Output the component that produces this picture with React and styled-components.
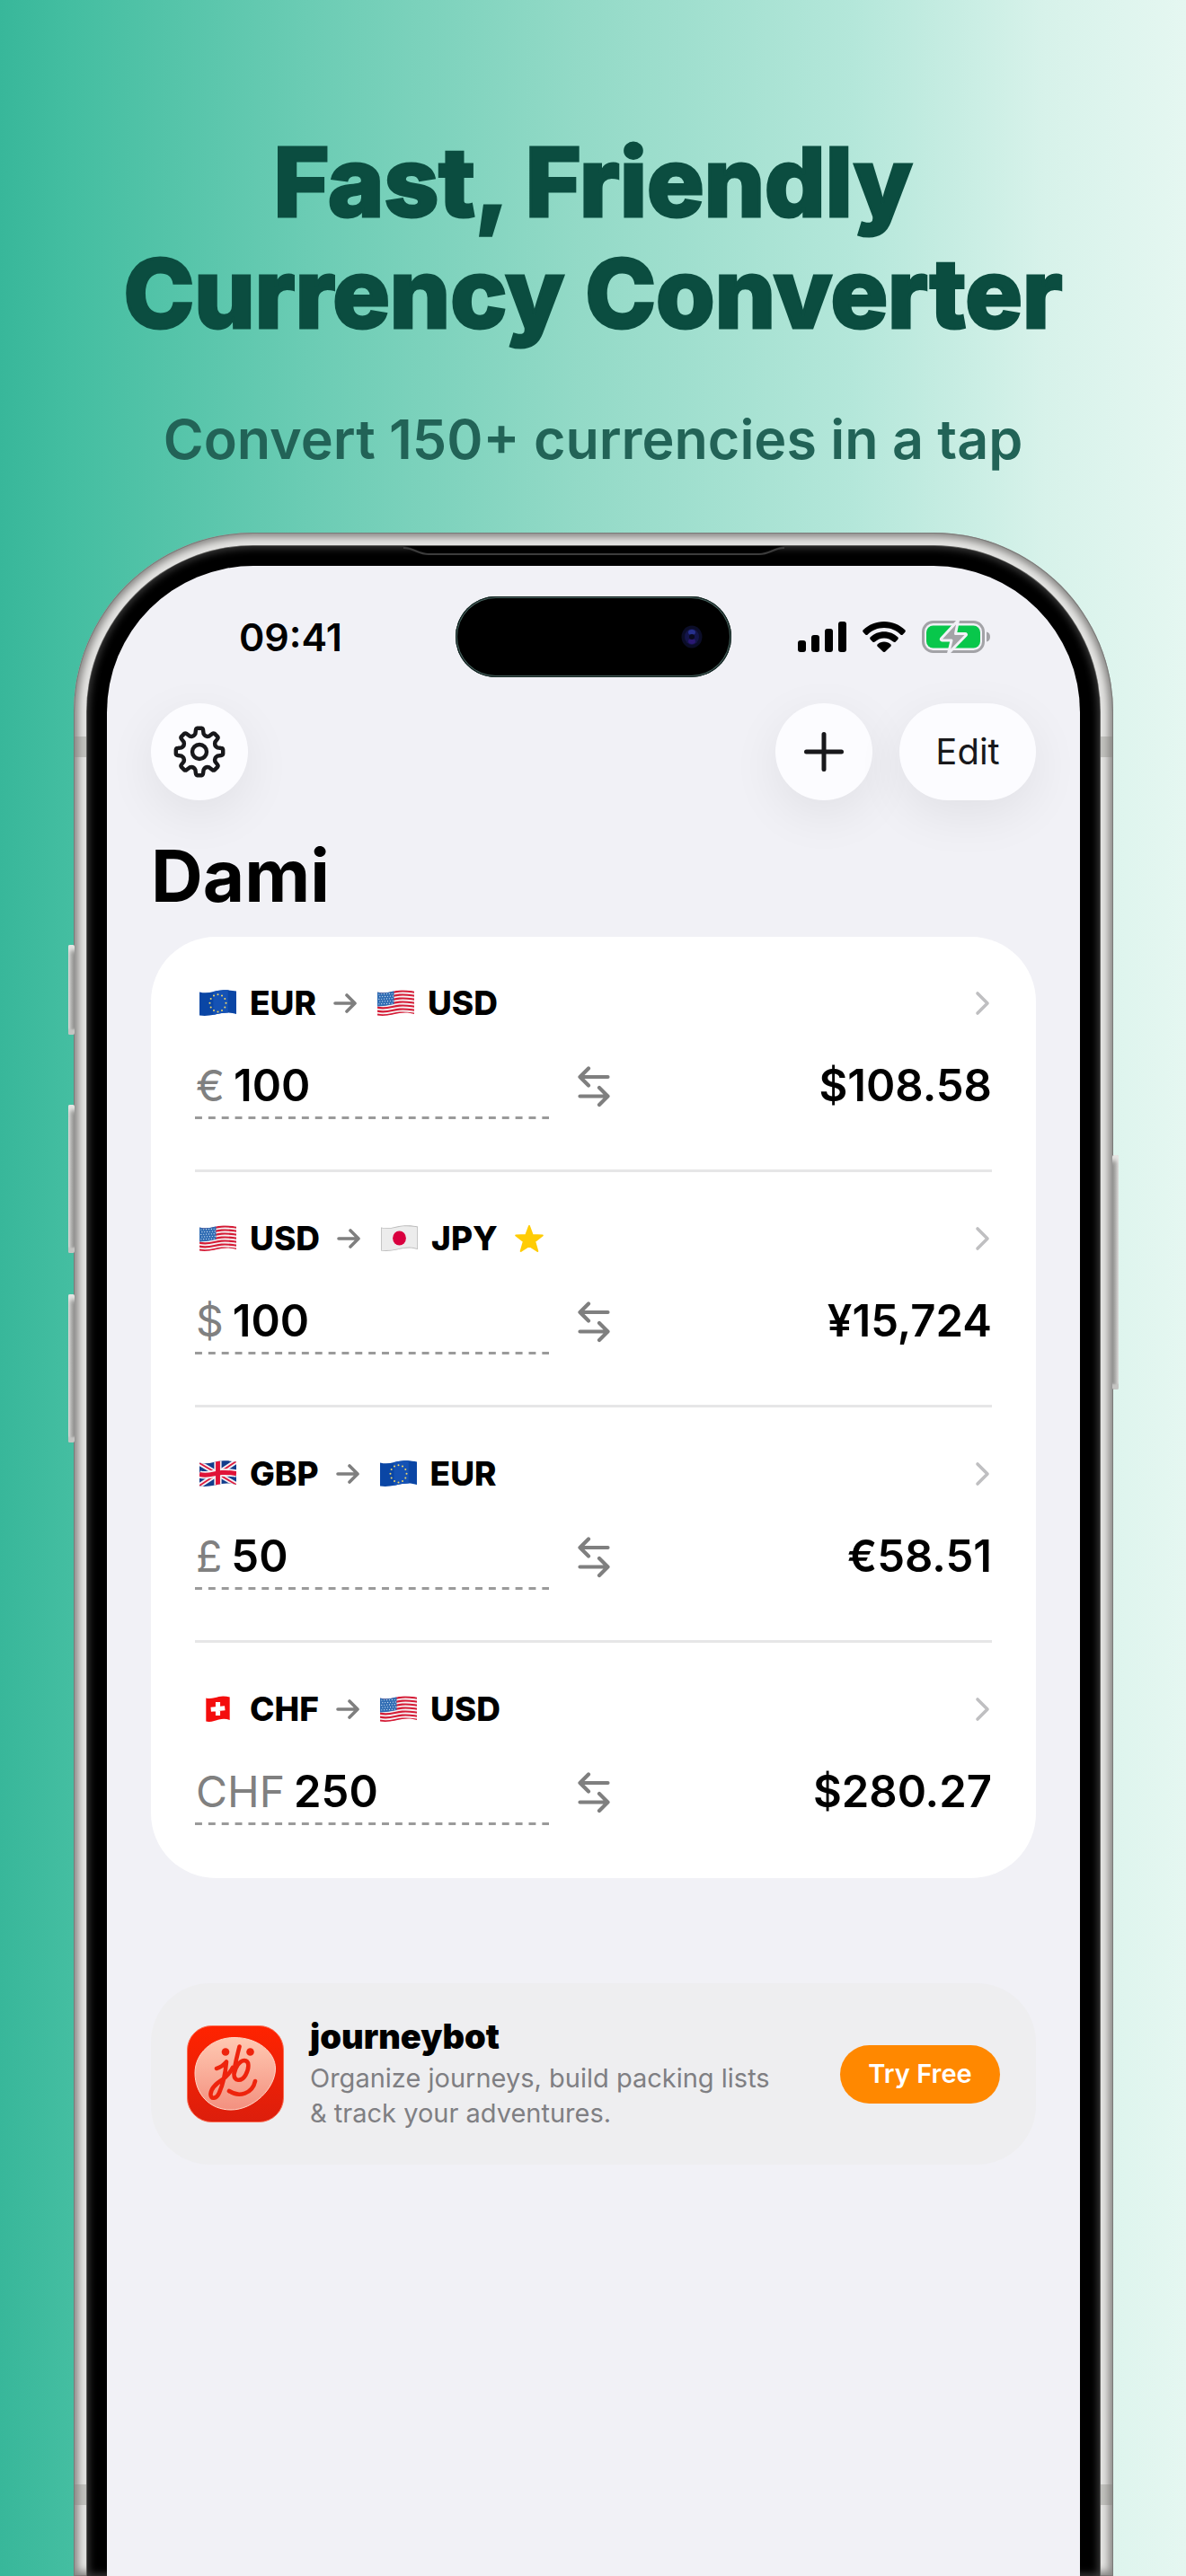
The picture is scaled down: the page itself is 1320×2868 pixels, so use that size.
import React, { useState } from "react";
import styled, { createGlobalStyle } from "styled-components";

const GlobalStyle = createGlobalStyle`
  *, *::before, *::after { box-sizing: border-box; }
  html, body, #root { margin: 0; min-height: 100vh; }
  body {
    font-family: Inter, "Liberation Sans", sans-serif;
    color: #000;
    -webkit-font-smoothing: antialiased;
  }
  button, input { font: inherit; color: inherit; }
`;

/* ---------- page ---------- */

const Page = styled.div`
  display: flex;
  flex-direction: column;
  min-height: 100vh;
  overflow: hidden;
  background: linear-gradient(
    90deg,
    #38b79a 0%,
    #44bea1 6%,
    #6bccb4 26%,
    #93dac7 49%,
    #b4e7da 72%,
    #d7f2ea 88%,
    #e5f7f1 100%
  );
`;

const Hero = styled.header`
  display: flex;
  flex-direction: column;
  align-items: center;
  gap: 60px;
  padding: 141px 40px 64px;
  text-align: center;
`;

const Headline = styled.h1`
  margin: 0;
  font-size: 106px;
  line-height: 124px;
  font-weight: 800;
  color: #0b4d40;
  -webkit-text-stroke: 3px #0b4d40;
  stroke-linejoin: round;
`;

const Tagline = styled.p`
  margin: 0;
  font-size: 61px;
  line-height: 80px;
  font-weight: 600;
  color: #226357;
`;

/* ---------- phone ---------- */

const Phone = styled.div`
  position: relative;
  display: flex;
  flex: 1;
  margin: 0 81px 0 82px;
  padding: 15px 15px 0;
  border-radius: 200px 200px 0 0;
  background: #e4e4e2;
  box-shadow:
    inset 0 0 0 1px #7b7b79,
    inset 0 0 9px 5px #868583;
`;

const Bezel = styled.div`
  position: relative;
  display: flex;
  flex: 1;
  padding: 22px 22px 0;
  border-radius: 185px 185px 0 0;
  background: #000;
  box-shadow:
    0 0 0 1px #5c5c5a,
    inset 0 0 8px 2px #3c3c3c;
`;

const Earpiece = styled.svg`
  position: absolute;
  top: 0;
  left: 50%;
  transform: translateX(-50%);
`;

const SideButton = styled.span`
  position: absolute;
  top: ${(p) => p.$top}px;
  ${(p) => p.$side}: -6px;
  width: 7px;
  height: ${(p) => p.$length}px;
  border-radius: 2px;
  background: linear-gradient(
    ${(p) => (p.$side === "left" ? "90deg" : "270deg")},
    #dcdcda 0%,
    #b3b3b1 45%,
    #8d8d8b 100%
  );
  box-shadow: inset 0 10px 5px -4px #e6e6e4, inset 0 -8px 2px -2px #c4c4c2;
`;

const AntennaBand = styled.span`
  position: absolute;
  ${(p) => p.$edge}: ${(p) => p.$offset}px;
  ${(p) => p.$side}: 1px;
  width: 13px;
  height: 23px;
  background: rgba(130, 128, 122, 0.35);
`;

const Screen = styled.main`
  flex: 1;
  min-width: 0;
  padding: 34px 49px 120px;
  border-radius: 163px 163px 0 0;
  background: #f1f1f6;
`;

/* ---------- status bar ---------- */

const StatusBar = styled.div`
  display: grid;
  grid-template-columns: 1fr 307px 1fr;
  align-items: center;
`;

const Clock = styled.time`
  padding-left: 98px;
  font-size: 43px;
  line-height: 50px;
  font-weight: 600;
`;

const Island = styled.div`
  display: flex;
  justify-content: flex-end;
  align-items: center;
  height: 90px;
  padding-right: 32px;
  border-radius: 45px;
  background: #000;
  box-shadow: inset 0 0 0 1px #10201e, inset 0 0 0 2px #47605c;
`;

const StatusIcons = styled.div`
  display: flex;
  justify-content: flex-end;
  align-items: center;
  gap: 18px;
  padding-right: 50px;
`;

/* ---------- navigation ---------- */

const Toolbar = styled.nav`
  display: flex;
  gap: 30px;
  margin-top: 29px;
`;

const RoundButton = styled.button`
  display: flex;
  align-items: center;
  justify-content: center;
  width: ${(p) => p.$width || 108}px;
  height: 108px;
  margin-right: ${(p) => (p.$first ? "auto" : "0")};
  padding: 0;
  border: 0;
  border-radius: 54px;
  background: #fcfcff;
  box-shadow: 0 16px 56px rgba(0, 0, 0, 0.07);
  color: #18181b;
  font-size: 40px;
  line-height: 48px;
  font-weight: 400;
`;

const ScreenTitle = styled.h2`
  margin: 36px 0 20px;
  font-size: 80px;
  line-height: 96px;
  font-weight: 700;
`;

/* ---------- conversions ---------- */

const Card = styled.ul`
  margin: 0;
  padding: 0 49px;
  list-style: none;
  border-radius: 72px;
  background: #fff;
`;

const Row = styled.li`
  padding: 52px 0 56px;
  border-bottom: 3px solid #e6e6e7;

  &:last-child {
    border-bottom-color: transparent;
  }
`;

const PairLink = styled.a`
  display: flex;
  align-items: center;
  height: 44px;
  padding: 0 2px 0 5px;
  color: inherit;
  font-size: 37px;
  line-height: 44px;
  font-weight: 800;
  text-decoration: none;
`;

const Code = styled.span`
  margin-left: 15px;
`;

const ArrowSlot = styled.span`
  display: flex;
  margin: 0 23px 0 19px;
`;

const StarSlot = styled.span`
  display: flex;
  margin-left: 18px;
`;

const ChevronSlot = styled.span`
  display: flex;
  margin-left: auto;
`;

const Amounts = styled.div`
  display: grid;
  grid-template-columns: minmax(0, 1fr) 36px minmax(0, 1fr);
  align-items: center;
  gap: 32px;
  margin-top: 35px;
  font-size: 49px;
  line-height: 58px;
`;

const Field = styled.label`
  display: flex;
  align-items: center;
  gap: 10px;
  height: 72px;
  padding: 0 0 3px 1px;
  background: linear-gradient(90deg, #9a9a9a 52%, transparent 0) left bottom /
    calc(100% / 26.5) 3px repeat-x;
`;

const Symbol = styled.span`
  color: #808080;
  font-size: 48px;
  font-weight: 400;
`;

const AmountInput = styled.input`
  flex: 1;
  min-width: 0;
  padding: 0;
  border: 0;
  outline: 0;
  background: transparent;
  font-weight: 600;
`;

const SwapButton = styled.button`
  display: flex;
  padding: 0;
  border: 0;
  background: transparent;
`;

const Result = styled.output`
  padding-bottom: 3px;
  text-align: right;
  font-weight: 600;
`;

/* ---------- promo ---------- */

const Promo = styled.aside`
  display: flex;
  align-items: center;
  margin-top: 117px;
  padding: 38px 40px;
  border-radius: 66px;
  background: #eeeef0;
`;

const PromoBody = styled.div`
  flex: 1;
  margin-left: 29px;
`;

const PromoTitle = styled.h3`
  margin: 0 0 6px;
  font-size: 38px;
  line-height: 42px;
  font-weight: 900;
`;

const PromoText = styled.p`
  margin: 0;
  color: #7f7f83;
  font-size: 29px;
  line-height: 39px;
`;

const PromoButton = styled.button`
  width: 178px;
  height: 65px;
  padding: 0;
  border: 0;
  border-radius: 33px;
  background: #ff8800;
  color: #fff;
  font-size: 29px;
  line-height: 34px;
  font-weight: 600;
`;

/* ---------- drawings ---------- */

const wave = (y) =>
  `M0 ${y} C10 ${y + 2.5} 16 ${y - 1.5} 24 ${y - 2} S36 ${y - 1.5} 40 ${y - 1}`;

const FLAG_SHAPE =
  "M0 2.5 C10 5 16 1 24 0.5 S36 1 40 1.5 V27 C36 25.5 30 25 24 26 S10 30 0 28.5 Z";
const SQUARE_FLAG_SHAPE =
  "M7 2.5 C12 4 17 2 21 1 S29 .5 33 1.5 V27 C29 25.5 25 25.5 21 26.5 S12 30 7 28.5 Z";

function UsaFlag() {
  return (
    <>
      <rect width="40" height="30" fill="#f6f2f3" />
      {[0, 1, 2, 3, 4, 5, 6].map((i) => (
        <path key={i} d={wave(3.6 + i * 4)} stroke="#d51c36" strokeWidth="2.2" fill="none" />
      ))}
      <path d="M0 0 H18 V16 Q9 18 0 18.5 Z" fill="#2f6cb3" />
      {[0, 1, 2, 3, 4].map((r) =>
        [0, 1, 2, 3, 4, 5].map((c) => (
          <circle
            key={`${r}-${c}`}
            cx={1.8 + c * 2.8 + (r % 2)}
            cy={5 + r * 2.7 - c * 0.15}
            r="0.6"
            fill="#dce9f7"
          />
        ))
      )}
    </>
  );
}

function EuFlag() {
  return (
    <>
      <rect width="40" height="30" fill="#0a46a5" />
      <rect x="15" width="16" height="30" fill="#1552b4" />
      {Array.from({ length: 12 }, (_, i) => {
        const a = (i * Math.PI) / 6;
        return (
          <circle
            key={i}
            cx={20 + 8.8 * Math.sin(a)}
            cy={14.8 - 9.6 * Math.cos(a)}
            r="1"
            fill="#eed66a"
          />
        );
      })}
    </>
  );
}

function JapanFlag() {
  return (
    <>
      <rect width="40" height="30" fill="#ececec" />
      <path d={FLAG_SHAPE} fill="none" stroke="#bdbdbd" strokeWidth="1.6" />
      <ellipse cx="20" cy="14.5" rx="7.2" ry="8" fill="#d9003f" />
    </>
  );
}

function UkFlag() {
  return (
    <>
      <rect width="40" height="30" fill="#123d8c" />
      <path d="M0 3 L40 27 M0 28 L40 1" stroke="#f4f0f4" strokeWidth="5.5" />
      <path d="M0 3 L40 27 M0 28 L40 1" stroke="#dc1a3c" strokeWidth="1.8" />
      <path d="M20 0 V30" stroke="#f4f0f4" strokeWidth="8" />
      <path d={wave(15.5)} stroke="#f4f0f4" strokeWidth="8.5" fill="none" />
      <path d="M20 0 V30" stroke="#e01338" strokeWidth="4.8" />
      <path d={wave(15.5)} stroke="#e01338" strokeWidth="5" fill="none" />
    </>
  );
}

function SwissFlag() {
  return (
    <>
      <rect width="40" height="30" fill="#f40d0d" />
      <path d="M20 7 V22 M12.4 15.2 L27.6 13.8" stroke="#fff" strokeWidth="5" />
    </>
  );
}

const FLAGS = { USD: UsaFlag, EUR: EuFlag, JPY: JapanFlag, GBP: UkFlag, CHF: SwissFlag };

function Flag({ code, id }) {
  const Art = FLAGS[code];
  return (
    <svg width="41" height="30" viewBox="0 0 40 30" preserveAspectRatio="none" aria-hidden="true">
      <clipPath id={id}>
        <path d={code === "CHF" ? SQUARE_FLAG_SHAPE : FLAG_SHAPE} />
      </clipPath>
      <g clipPath={`url(#${id})`}>
        <Art />
      </g>
    </svg>
  );
}

const gearPath = (() => {
  const point = (deg, r) => {
    const a = (deg * Math.PI) / 180;
    return `${(30 + r * Math.sin(a)).toFixed(2)} ${(30 - r * Math.cos(a)).toFixed(2)}`;
  };
  let d = "";
  for (let i = 0; i < 8; i += 1) {
    const c = i * 45;
    d += `${i ? "L" : "M"}${point(c - 13, 20.5)} L${point(c - 9.5, 24.5)} Q${point(c - 8.5, 26.3)} ${point(c - 5, 26.3)} L${point(c + 5, 26.3)} Q${point(c + 8.5, 26.3)} ${point(c + 9.5, 24.5)} L${point(c + 13, 20.5)} Q${point(c + 22.5, 17.5)} ${point(c + 32, 20.5)} `;
  }
  return `${d}Z`;
})();

const GearIcon = () => (
  <svg width="60" height="60" viewBox="0 0 60 60" fill="none" stroke="#18181b" strokeWidth="4.4" strokeLinejoin="round" aria-hidden="true">
    <path d={gearPath} />
    <circle cx="30" cy="30" r="8" />
  </svg>
);

const PlusIcon = () => (
  <svg width="46" height="46" viewBox="0 0 46 46" stroke="#18181b" strokeWidth="5" strokeLinecap="round" aria-hidden="true">
    <path d="M23 3.5 V42.5 M3.5 23 H42.5" />
  </svg>
);

const ArrowIcon = () => (
  <svg width="26" height="24" viewBox="0 0 26 24" fill="none" stroke="#7f7f7f" strokeWidth="3.6" strokeLinecap="round" strokeLinejoin="round" aria-hidden="true">
    <path d="M2 12 H23.5 M15 3 L24 12 L15 21" />
  </svg>
);

const SwapIcon = () => (
  <svg width="36" height="46" viewBox="0 0 36 46" fill="none" stroke="#7f7f7f" strokeWidth="4.2" strokeLinecap="round" strokeLinejoin="round" aria-hidden="true">
    <path d="M33.5 12 H3 M12 2.500 L2.5 12 L12 21.500" />
    <path d="M2.5 33.500 H33 M24 24 L33.5 33.500 L24 43" />
  </svg>
);

const ChevronIcon = () => (
  <svg width="17" height="28" viewBox="0 0 17 28" fill="none" stroke="#bfbfc1" strokeWidth="3.6" strokeLinecap="round" strokeLinejoin="round" aria-hidden="true">
    <path d="M3 3 L14 14 L3 25" />
  </svg>
);

const StarIcon = () => (
  <svg width="34" height="32" viewBox="0 0 34 32" fill="#ffcc05" stroke="#ffcc05" strokeWidth="2" strokeLinejoin="round" aria-hidden="true">
    <path d="M17 2 L20.7 12 L31.8 12.4 L23.2 19.2 L26.3 30 L17 23.8 L7.7 30 L10.8 19.2 L2.2 12.4 L13.3 12 Z" />
  </svg>
);

const CameraLens = () => (
  <svg width="24" height="34" viewBox="0 0 24 34" aria-hidden="true">
    <ellipse cx="12" cy="17" rx="11.5" ry="12.5" fill="#0b0d28" />
    <ellipse cx="12" cy="17" rx="8" ry="9" fill="#14154a" />
    <ellipse cx="12" cy="12" rx="4" ry="3" fill="#26308c" />
    <ellipse cx="12" cy="22" rx="4" ry="3" fill="#2a1873" />
    <circle cx="12" cy="17" r="3" fill="#090a1e" />
  </svg>
);

const SignalIcon = () => (
  <svg width="54" height="34" viewBox="0 0 54 34" aria-hidden="true">
    <rect x="0" y="21" width="9" height="13" rx="3" />
    <rect x="15" y="15" width="9" height="19" rx="3" />
    <rect x="30" y="8" width="9" height="26" rx="3" />
    <rect x="45" y="0" width="9" height="34" rx="3" />
  </svg>
);

const WifiIcon = () => (
  <svg width="48" height="34" viewBox="0 0 48 34" aria-hidden="true">
    <path d="M24 0 C33 0 41.300 3.600 47.200 9.300 C48 10 48 11.200 47.200 12 L44.800 14.400 C44.100 15.100 43 15.100 42.300 14.400 C37.500 9.900 31.100 7.100 24 7.100 C16.900 7.100 10.500 9.900 5.700 14.400 C5 15.100 3.900 15.100 3.200 14.400 L.8 12 C0 11.200 0 10 .8 9.300 C6.700 3.600 15 0 24 0 Z" />
    <path d="M24 11.300 C29.900 11.300 35.200 13.600 39.200 17.300 C40 18 40 19.200 39.200 20 L36.800 22.400 C36.100 23.100 35 23.100 34.200 22.500 C31.500 20 27.900 18.400 24 18.400 C20.100 18.400 16.500 20 13.800 22.500 C13 23.100 11.900 23.100 11.200 22.400 L8.800 20 C8 19.200 8 18 8.800 17.300 C12.800 13.600 18.100 11.300 24 11.300 Z" />
    <path d="M24 22.600 C26.800 22.600 29.300 23.600 31.200 25.200 C32 25.900 32 27.100 31.300 27.800 L25.300 33.500 C24.600 34.200 23.400 34.200 22.700 33.500 L16.700 27.800 C16 27.100 16 25.900 16.800 25.200 C18.700 23.600 21.200 22.600 24 22.600 Z" />
  </svg>
);

const BatteryIcon = () => (
  <svg width="77" height="38" viewBox="0 0 77 38" aria-hidden="true">
    <rect x="1.500" y="2.500" width="67" height="33" rx="11" fill="none" stroke="#a3a3a7" strokeWidth="3" />
    <path d="M72 13.500 C75 14 76 16.500 76 19 C76 21.500 75 24 72 24.500 Z" fill="#a3a3a7" />
    <rect x="5" y="6.500" width="60" height="25" rx="7.500" fill="#08c74b" />
    <path d="M40.500 0.500 L21.500 21 C21 22 21.500 23 22.500 23 H33 L29.500 37.500 L49 17.500 C50 16.500 49.500 15.500 48 15.500 H37.500 Z" fill="#a3a3a7" stroke="#f1f1f6" strokeWidth="3" strokeLinejoin="round" />
  </svg>
);

const JourneybotLogo = () => (
  <svg width="108" height="108" viewBox="0 0 108 108" aria-hidden="true">
    <defs>
      <linearGradient id="jb-tile" x1="0" y1="0" x2="0" y2="1">
        <stop offset="0" stopColor="#ff2300" />
        <stop offset="1" stopColor="#dc1e0c" />
      </linearGradient>
      <linearGradient id="jb-face" x1="0" y1="0" x2="0" y2="1">
        <stop offset="0" stopColor="#ffc9b2" />
        <stop offset="1" stopColor="#f3907f" />
      </linearGradient>
    </defs>
    <rect x="0.500" y="0.500" width="107" height="107" rx="27" fill="url(#jb-tile)" stroke="#fb6d53" />
    <path d="M9 53 C9 31 28 13.500 53 13.500 C79 13.500 98.500 30 98.500 48 C98.500 70 74 94 49 94 C25 94 9 76 9 53 Z" fill="url(#jb-face)" stroke="#ffd5c6" />
    <g fill="none" stroke="#ee240d" strokeWidth="4.600" strokeLinecap="round" strokeLinejoin="round">
      <path d="M33 48 C37 47 41 44 44 40.500 C43 52 40 66 36 75 C33 82 26 83 26.500 76 C27 69 34 64 40 60 C46 56 48 52 51 47" />
      <path d="M58.500 23.500 C56 34 53 44 52.500 53 C52 63 61 63 65.500 55 C70 46 69 39 64 39 C58 39.500 54 47 52.500 54" />
      <path d="M47 73 C58 80.500 73 76 76 62" />
    </g>
    <circle cx="43" cy="29.500" r="4.300" fill="#ee240d" />
    <circle cx="70.500" cy="29.500" r="4.300" fill="#ee240d" />
  </svg>
);

/* ---------- screen content ---------- */

const CONVERSIONS = [
  { from: "EUR", to: "USD", symbol: "€", amount: "100", result: "$108.58" },
  { from: "USD", to: "JPY", symbol: "$", amount: "100", result: "¥15,724", favourite: true },
  { from: "GBP", to: "EUR", symbol: "£", amount: "50", result: "€58.51" },
  { from: "CHF", to: "USD", symbol: "CHF", amount: "250", result: "$280.27" },
];

function Conversion({ from, to, symbol, amount, result, favourite }) {
  const [value, setValue] = useState(amount);
  const id = `${from}-${to}`;
  return (
    <Row>
      <PairLink href={`#${id}`}>
        <Flag code={from} id={`${id}-from`} />
        <Code>{from}</Code>
        <ArrowSlot>
          <ArrowIcon />
        </ArrowSlot>
        <Flag code={to} id={`${id}-to`} />
        <Code>{to}</Code>
        {favourite && (
          <StarSlot>
            <StarIcon />
          </StarSlot>
        )}
        <ChevronSlot>
          <ChevronIcon />
        </ChevronSlot>
      </PairLink>
      <Amounts>
        <Field htmlFor={id}>
          <Symbol>{symbol}</Symbol>
          <AmountInput
            id={id}
            inputMode="decimal"
            value={value}
            onChange={(e) => setValue(e.target.value)}
          />
        </Field>
        <SwapButton type="button" aria-label="Swap currencies">
          <SwapIcon />
        </SwapButton>
        <Result htmlFor={id}>{result}</Result>
      </Amounts>
    </Row>
  );
}

export default function App() {
  return (
    <Page>
      <GlobalStyle />
      <Hero>
        <Headline>
          Fast, Friendly
          <br />
          Currency Converter
        </Headline>
        <Tagline>Convert 150+ currencies in a tap</Tagline>
      </Hero>
      <Phone>
        <SideButton $side="left" $top={459} $length={100} />
        <SideButton $side="left" $top={637} $length={165} />
        <SideButton $side="left" $top={848} $length={165} />
        <SideButton $side="right" $top={693} $length={261} />
        <AntennaBand $side="left" $edge="top" $offset={227} />
        <AntennaBand $side="right" $edge="top" $offset={227} />
        <AntennaBand $side="left" $edge="bottom" $offset={79} />
        <AntennaBand $side="right" $edge="bottom" $offset={79} />
        <Bezel>
          <Earpiece width="424" height="16" viewBox="0 0 424 16" aria-hidden="true">
            <path d="M0 0 H424 C412 1 408 8 396 8 H28 C16 8 12 1 0 0 Z" fill="#000" />
            <path d="M0 2 C12 2 16 9 28 9 H396 C408 9 412 2 424 2" fill="none" stroke="#3c3c3c" strokeWidth="2" />
          </Earpiece>
          <Screen>
            <StatusBar>
              <Clock>09:41</Clock>
              <Island>
                <CameraLens />
              </Island>
              <StatusIcons>
                <SignalIcon />
                <WifiIcon />
                <BatteryIcon />
              </StatusIcons>
            </StatusBar>
            <Toolbar>
              <RoundButton type="button" aria-label="Settings" $first>
                <GearIcon />
              </RoundButton>
              <RoundButton type="button" aria-label="Add">
                <PlusIcon />
              </RoundButton>
              <RoundButton type="button" $width={152}>
                Edit
              </RoundButton>
            </Toolbar>
            <ScreenTitle>Dami</ScreenTitle>
            <Card>
              {CONVERSIONS.map((c) => (
                <Conversion key={`${c.from}-${c.to}`} {...c} />
              ))}
            </Card>
            <Promo>
              <JourneybotLogo />
              <PromoBody>
                <PromoTitle>journeybot</PromoTitle>
                <PromoText>
                  Organize journeys, build packing lists
                  <br />
                  &amp; track your adventures.
                </PromoText>
              </PromoBody>
              <PromoButton type="button">Try Free</PromoButton>
            </Promo>
          </Screen>
        </Bezel>
      </Phone>
    </Page>
  );
}
